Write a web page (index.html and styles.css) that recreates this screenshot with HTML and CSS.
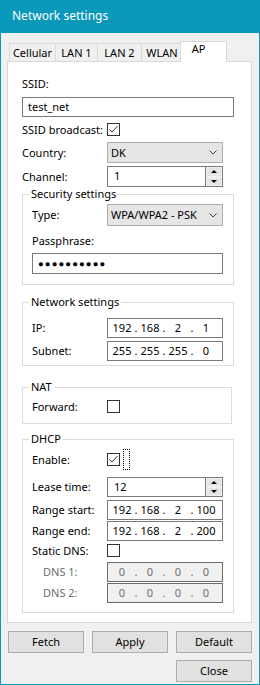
FILE: index.html
```html
<!DOCTYPE html>
<html lang="en">
<head>
    <meta charset="UTF-8">
    <title>Network settings</title>
    <link rel="stylesheet" href="styles.css">
</head>
<body>
    <div class="window">
        <div class="titlebar">Network settings</div>

        <div class="tabs">
            <div class="tab t-cell">Cellular</div>
            <div class="tab t-lan1">LAN 1</div>
            <div class="tab t-lan2">LAN 2</div>
            <div class="tab t-wlan">WLAN</div>
            <div class="tab active">AP</div>
        </div>

        <div class="panel">
            <div class="caption">SSID:</div>
            <div class="edit wide ssid">test_net</div>

            <div class="row check-row broadcast">
                <span class="lbl">SSID broadcast:</span>
                <span class="check on"><svg viewBox="0 0 11 11" width="11" height="11"><path d="M1.5 5.5 L4 8 L9.5 2" fill="none" stroke="#333" stroke-width="1"/></svg></span>
            </div>

            <div class="row country">
                <span class="lbl">Country:</span>
                <div class="combo h21">DK<svg class="chev" viewBox="0 0 8 5" width="8" height="5"><path d="M0.5 0.5 L4 4 L7.5 0.5" fill="none" stroke="#444" stroke-width="1"/></svg></div>
            </div>

            <div class="row channel">
                <span class="lbl">Channel:</span>
                <div class="spin h21">
                    <span class="spin-val">1</span>
                    <span class="spin-btns"><span class="up"></span><span class="down"></span></span>
                </div>
            </div>

            <fieldset class="group security">
                <legend>Security settings</legend>
                <div class="row type">
                    <span class="lbl">Type:</span>
                    <div class="combo h22">WPA/WPA2 - PSK<svg class="chev" viewBox="0 0 8 5" width="8" height="5"><path d="M0.5 0.5 L4 4 L7.5 0.5" fill="none" stroke="#444" stroke-width="1"/></svg></div>
                </div>
                <div class="caption pass-cap">Passphrase:</div>
                <div class="edit wide pass">●●●●●●●●●●</div>
            </fieldset>

            <fieldset class="group network">
                <legend>Network settings</legend>
                <div class="row ip-row first">
                    <span class="lbl">IP:</span>
                    <div class="ip"><span>192</span><i>.</i><span>168</span><i>.</i><span>2</span><i>.</i><span>1</span></div>
                </div>
                <div class="row ip-row gap3">
                    <span class="lbl">Subnet:</span>
                    <div class="ip"><span>255</span><i>.</i><span>255</span><i>.</i><span>255</span><i>.</i><span>0</span></div>
                </div>
            </fieldset>

            <fieldset class="group nat">
                <legend>NAT</legend>
                <div class="row check-row forward">
                    <span class="lbl">Forward:</span>
                    <span class="check"></span>
                </div>
            </fieldset>

            <fieldset class="group dhcp">
                <legend>DHCP</legend>
                <div class="row check-row enable">
                    <span class="lbl">Enable:</span>
                    <span class="check on"><svg viewBox="0 0 11 11" width="11" height="11"><path d="M1.5 5.5 L4 8 L9.5 2" fill="none" stroke="#333" stroke-width="1"/></svg></span>
                    <span class="focus"></span>
                </div>
                <div class="row lease">
                    <span class="lbl">Lease time:</span>
                    <div class="spin h20">
                        <span class="spin-val">12</span>
                        <span class="spin-btns"><span class="up"></span><span class="down"></span></span>
                    </div>
                </div>
                <div class="row ip-row gap3">
                    <span class="lbl">Range start:</span>
                    <div class="ip"><span>192</span><i>.</i><span>168</span><i>.</i><span>2</span><i>.</i><span>100</span></div>
                </div>
                <div class="row ip-row gap1">
                    <span class="lbl">Range end:</span>
                    <div class="ip"><span>192</span><i>.</i><span>168</span><i>.</i><span>2</span><i>.</i><span>200</span></div>
                </div>
                <div class="row check-row static">
                    <span class="lbl">Static DNS:</span>
                    <span class="check"></span>
                </div>
                <div class="row ip-row disabled dns1">
                    <span class="lbl">DNS 1:</span>
                    <div class="ip"><span>0</span><i>.</i><span>0</span><i>.</i><span>0</span><i>.</i><span>0</span></div>
                </div>
                <div class="row ip-row disabled gap1">
                    <span class="lbl">DNS 2:</span>
                    <div class="ip"><span>0</span><i>.</i><span>0</span><i>.</i><span>0</span><i>.</i><span>0</span></div>
                </div>
            </fieldset>
        </div>

        <div class="buttons">
            <button class="btn">Fetch</button>
            <button class="btn">Apply</button>
            <button class="btn">Default</button>
            <button class="btn close">Close</button>
        </div>
    </div>
</body>
</html>
```

FILE: styles.css
```css
* {
    margin: 0;
    padding: 0;
    box-sizing: border-box;
}

body {
    font-family: 'Noto Sans', sans-serif;
    font-size: 11px;
    line-height: 16px;
    color: #000;
    background: #f0f0f0;
}

.window {
    width: 260px;
    height: 685px;
    background: #f0f0f0;
    border: 1px solid #0a98bb;
    border-top: none;
}

.titlebar {
    height: 33px;
    margin: 0 -1px;
    padding-left: 12px;
    background: #0a98bb;
    color: #fff;
    font-size: 12px;
    line-height: 32px;
}

/* tabs */
.tabs {
    display: flex;
    align-items: flex-end;
    height: 20px;
    margin: 8px 0 0 8px;
}

.tab {
    height: 18px;
    border: 1px solid #d9d9d9;
    border-bottom: none;
    margin-right: -1px;
    background: #f0f0f0;
    line-height: 17px;
    text-align: center;
    white-space: nowrap;
}

.t-cell { width: 47px; }
.t-lan1 { width: 43px; }
.t-lan2 { width: 45px; }
.t-wlan { width: 42px; }

.tab.active {
    position: relative;
    width: 47px;
    height: 21px;
    margin: 0 0 -1px -2px;
    padding-right: 10px;
    background: #fff;
    line-height: 13px;
}

.panel {
    width: 245px;
    height: 562px;
    margin-left: 6px;
    padding: 0 17px 0 14px;
    background: #fff;
    border: 1px solid #d9d9d9;
}

.caption {
    height: 16px;
    margin-top: 14px;
}

.row {
    display: flex;
    align-items: center;
}

.lbl {
    width: 85px;
    flex: none;
}

.group .lbl {
    width: 75px;
}

/* edit boxes */
.edit {
    height: 20px;
    padding-left: 5px;
    border: 1px solid #7a7a7a;
    background: #fff;
    line-height: 18px;
}

.ssid {
    margin-top: 5px;
}

.check {
    width: 13px;
    height: 13px;
    flex: none;
    border: 1px solid #333;
    background: #fff;
}

.check svg {
    display: block;
}

.check-row {
    height: 13px;
}

.broadcast {
    margin-top: 6px;
}

.country {
    margin-top: 6px;
}

.channel {
    margin-top: 3px;
}

.combo {
    width: 116px;
    padding-left: 3px;
    border: 1px solid #adadad;
    background: #e5e5e5;
    display: flex;
    align-items: center;
}

.h21 { height: 21px; }
.h22 { height: 22px; }
.h20 { height: 20px; }

.chev {
    margin-left: auto;
    margin-right: 5px;
}

.spin {
    width: 116px;
    display: flex;
    border: 1px solid #7a7a7a;
    background: #fff;
}

.spin-val {
    flex: 1;
    padding-left: 6px;
    line-height: 18px;
}

.spin-btns {
    width: 17px;
    display: flex;
    flex-direction: column;
    border-left: 1px solid #7a7a7a;
}

.spin-btns span {
    flex: 1;
    display: flex;
    align-items: center;
    justify-content: center;
    background: #e5e5e5;
    border: 1px solid #f0f0f0;
}

.spin-btns .up::before {
    content: '';
    border: 3px solid transparent;
    border-top: none;
    border-bottom: 3px solid #000;
}

.spin-btns .down::before {
    content: '';
    border: 3px solid transparent;
    border-bottom: none;
    border-top: 3px solid #000;
}

/* group boxes */
.group {
    margin: 0;
    min-width: 0;
    padding: 0 10px 0 9px;
    border: 1px solid #dcdcdc;
}

.group legend {
    margin-left: -3px;
    padding: 0 2px;
    line-height: 16px;
}

.security {
    margin-top: -1px;
    padding-bottom: 10px;
}

.type {
    margin-top: 2px;
}

.pass-cap {
    margin-top: 7px;
}

.pass {
    height: 21px;
    margin-top: 4px;
    padding-left: 5px;
    font-size: 9.5px;
    letter-spacing: 1.1px;
    line-height: 19px;
}

.network {
    margin-top: 9px;
    padding-bottom: 4px;
}

.ip {
    width: 116px;
    height: 20px;
    display: flex;
    padding-left: 3px;
    border: 1px solid #7a7a7a;
    background: #fff;
    line-height: 18px;
}

.ip span {
    width: 22px;
    text-align: center;
}

.ip i {
    width: 6px;
    font-style: normal;
    text-align: center;
}

.first {
    margin-top: 8px;
}

.gap3 { margin-top: 3px; }
.gap1 { margin-top: 1px; }

.nat {
    width: 210px;
    margin-top: 13px;
    padding-bottom: 10px;
}

.forward {
    margin-top: 5px;
}

.dhcp {
    margin-top: 7px;
    padding-bottom: 9px;
}

.enable {
    margin-top: 2px;
    height: 21px;
}

.focus {
    width: 7px;
    height: 21px;
    margin-left: 3px;
    border: 1px dotted #000;
}

.lease {
    margin-top: 7px;
}

.static {
    margin-top: 3px;
}

.dns1 {
    margin-top: 5px;
}

.disabled {
    color: #6d6d6d;
}

.disabled .lbl {
    padding-left: 11px;
}

.disabled .ip {
    background: #f0f0f0;
    border-color: #6d6d6d;
    color: #6d6d6d;
}

/* buttons */
.buttons {
    display: grid;
    grid-template-columns: repeat(3, 76px);
    gap: 7px 8px;
    margin: 8px 0 0 7px;
}

.btn {
    height: 22px;
    font: inherit;
    color: #000;
    background: #e1e1e1;
    border: 1px solid #adadad;
}

.close {
    grid-column: 3;
}
```
